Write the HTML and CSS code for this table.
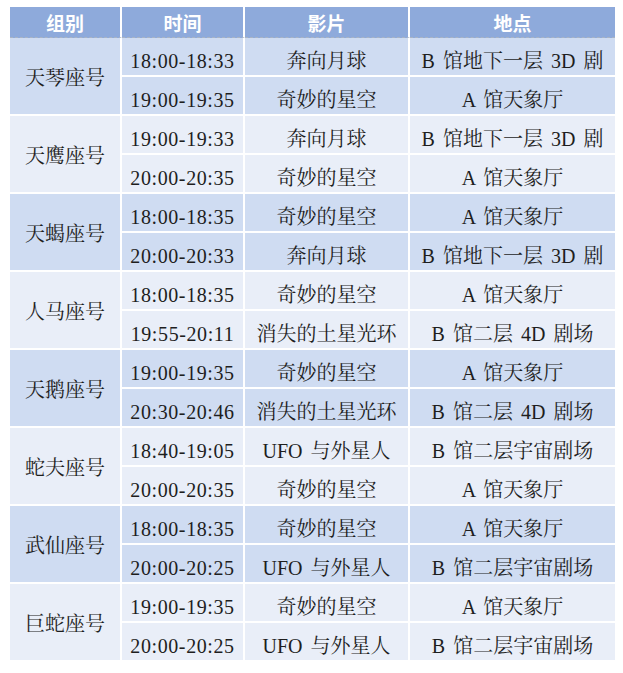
FILE: index.html
```html
<!DOCTYPE html>
<html lang="zh-CN">
<head>
<meta charset="utf-8">
<title>观影安排</title>
<link rel="stylesheet" href="styles.css">
</head>
<body>
<table class="schedule">
  <colgroup>
    <col class="c-group"><col class="c-time"><col class="c-film"><col class="c-place">
  </colgroup>
  <thead>
    <tr><th>组别</th><th>时间</th><th>影片</th><th>地点</th></tr>
  </thead>
  <tbody class="band-a">
    <tr><td rowspan="2" class="group">天琴座号</td><td class="time">18:00-18:33</td><td>奔向月球</td><td>B 馆地下一层 3D 剧</td></tr>
    <tr><td class="time">19:00-19:35</td><td>奇妙的星空</td><td>A 馆天象厅</td></tr>
  </tbody>
  <tbody class="band-b">
    <tr><td rowspan="2" class="group">天鹰座号</td><td class="time">19:00-19:33</td><td>奔向月球</td><td>B 馆地下一层 3D 剧</td></tr>
    <tr><td class="time">20:00-20:35</td><td>奇妙的星空</td><td>A 馆天象厅</td></tr>
  </tbody>
  <tbody class="band-a">
    <tr><td rowspan="2" class="group">天蝎座号</td><td class="time">18:00-18:35</td><td>奇妙的星空</td><td>A 馆天象厅</td></tr>
    <tr><td class="time">20:00-20:33</td><td>奔向月球</td><td>B 馆地下一层 3D 剧</td></tr>
  </tbody>
  <tbody class="band-b">
    <tr><td rowspan="2" class="group">人马座号</td><td class="time">18:00-18:35</td><td>奇妙的星空</td><td>A 馆天象厅</td></tr>
    <tr><td class="time">19:55-20:11</td><td>消失的土星光环</td><td>B 馆二层 4D 剧场</td></tr>
  </tbody>
  <tbody class="band-a">
    <tr><td rowspan="2" class="group">天鹅座号</td><td class="time">19:00-19:35</td><td>奇妙的星空</td><td>A 馆天象厅</td></tr>
    <tr><td class="time">20:30-20:46</td><td>消失的土星光环</td><td>B 馆二层 4D 剧场</td></tr>
  </tbody>
  <tbody class="band-b">
    <tr><td rowspan="2" class="group">蛇夫座号</td><td class="time">18:40-19:05</td><td>UFO 与外星人</td><td>B 馆二层宇宙剧场</td></tr>
    <tr><td class="time">20:00-20:35</td><td>奇妙的星空</td><td>A 馆天象厅</td></tr>
  </tbody>
  <tbody class="band-a">
    <tr><td rowspan="2" class="group">武仙座号</td><td class="time">18:00-18:35</td><td>奇妙的星空</td><td>A 馆天象厅</td></tr>
    <tr><td class="time">20:00-20:25</td><td>UFO 与外星人</td><td>B 馆二层宇宙剧场</td></tr>
  </tbody>
  <tbody class="band-b last">
    <tr><td rowspan="2" class="group">巨蛇座号</td><td class="time">19:00-19:35</td><td>奇妙的星空</td><td>A 馆天象厅</td></tr>
    <tr><td class="time">20:00-20:25</td><td>UFO 与外星人</td><td>B 馆二层宇宙剧场</td></tr>
  </tbody>
</table>
</body>
</html>
```
FILE: styles.css
```css
html, body {
  margin: 0;
  padding: 0;
  background: #ffffff;
}

.schedule {
  margin: 7px 0 0 10px;
  width: 605px;
  table-layout: fixed;
  border-collapse: separate;
  border-spacing: 0;
  font-family: "Liberation Serif", "Noto Serif CJK SC", "Noto Sans CJK SC", serif;
  font-size: 20px;
  line-height: 22px;
  color: #1e1e1e;
}

.c-group { width: 112px; }
.c-time { width: 123px; }
.c-film { width: 165px; }
.c-place { width: 205px; }

.schedule th,
.schedule td {
  box-sizing: border-box;
  padding: 0;
  text-align: center;
  vertical-align: middle;
  white-space: nowrap;
  overflow: hidden;
  border-right: 2px solid #ffffff;
}

.schedule th:last-child,
.schedule td:last-child {
  border-right: none;
}

.schedule th {
  height: 31px;
  background: #8eaadb;
  color: #ffffff;
  font-family: "Noto Sans CJK SC", sans-serif;
  font-weight: bold;
  font-size: 19px;
  line-height: 24px;
  border-bottom: 1px dashed #a9b4c4;
  padding-top: 1px;
}

.schedule td {
  height: 39px;
  border-bottom: 2px solid #ffffff;
  padding-top: 9px;
  word-spacing: 3px;
}

.schedule td.group {
  padding-top: 3px;
}

.schedule td.time {
  letter-spacing: 0.6px;
}

.schedule .last tr:last-child td,
.schedule .last td.group {
  border-bottom: none;
  height: 37px;
}

.band-a td { background: #cfdcf2; }
.band-b td { background: #e9eef8; }
```
